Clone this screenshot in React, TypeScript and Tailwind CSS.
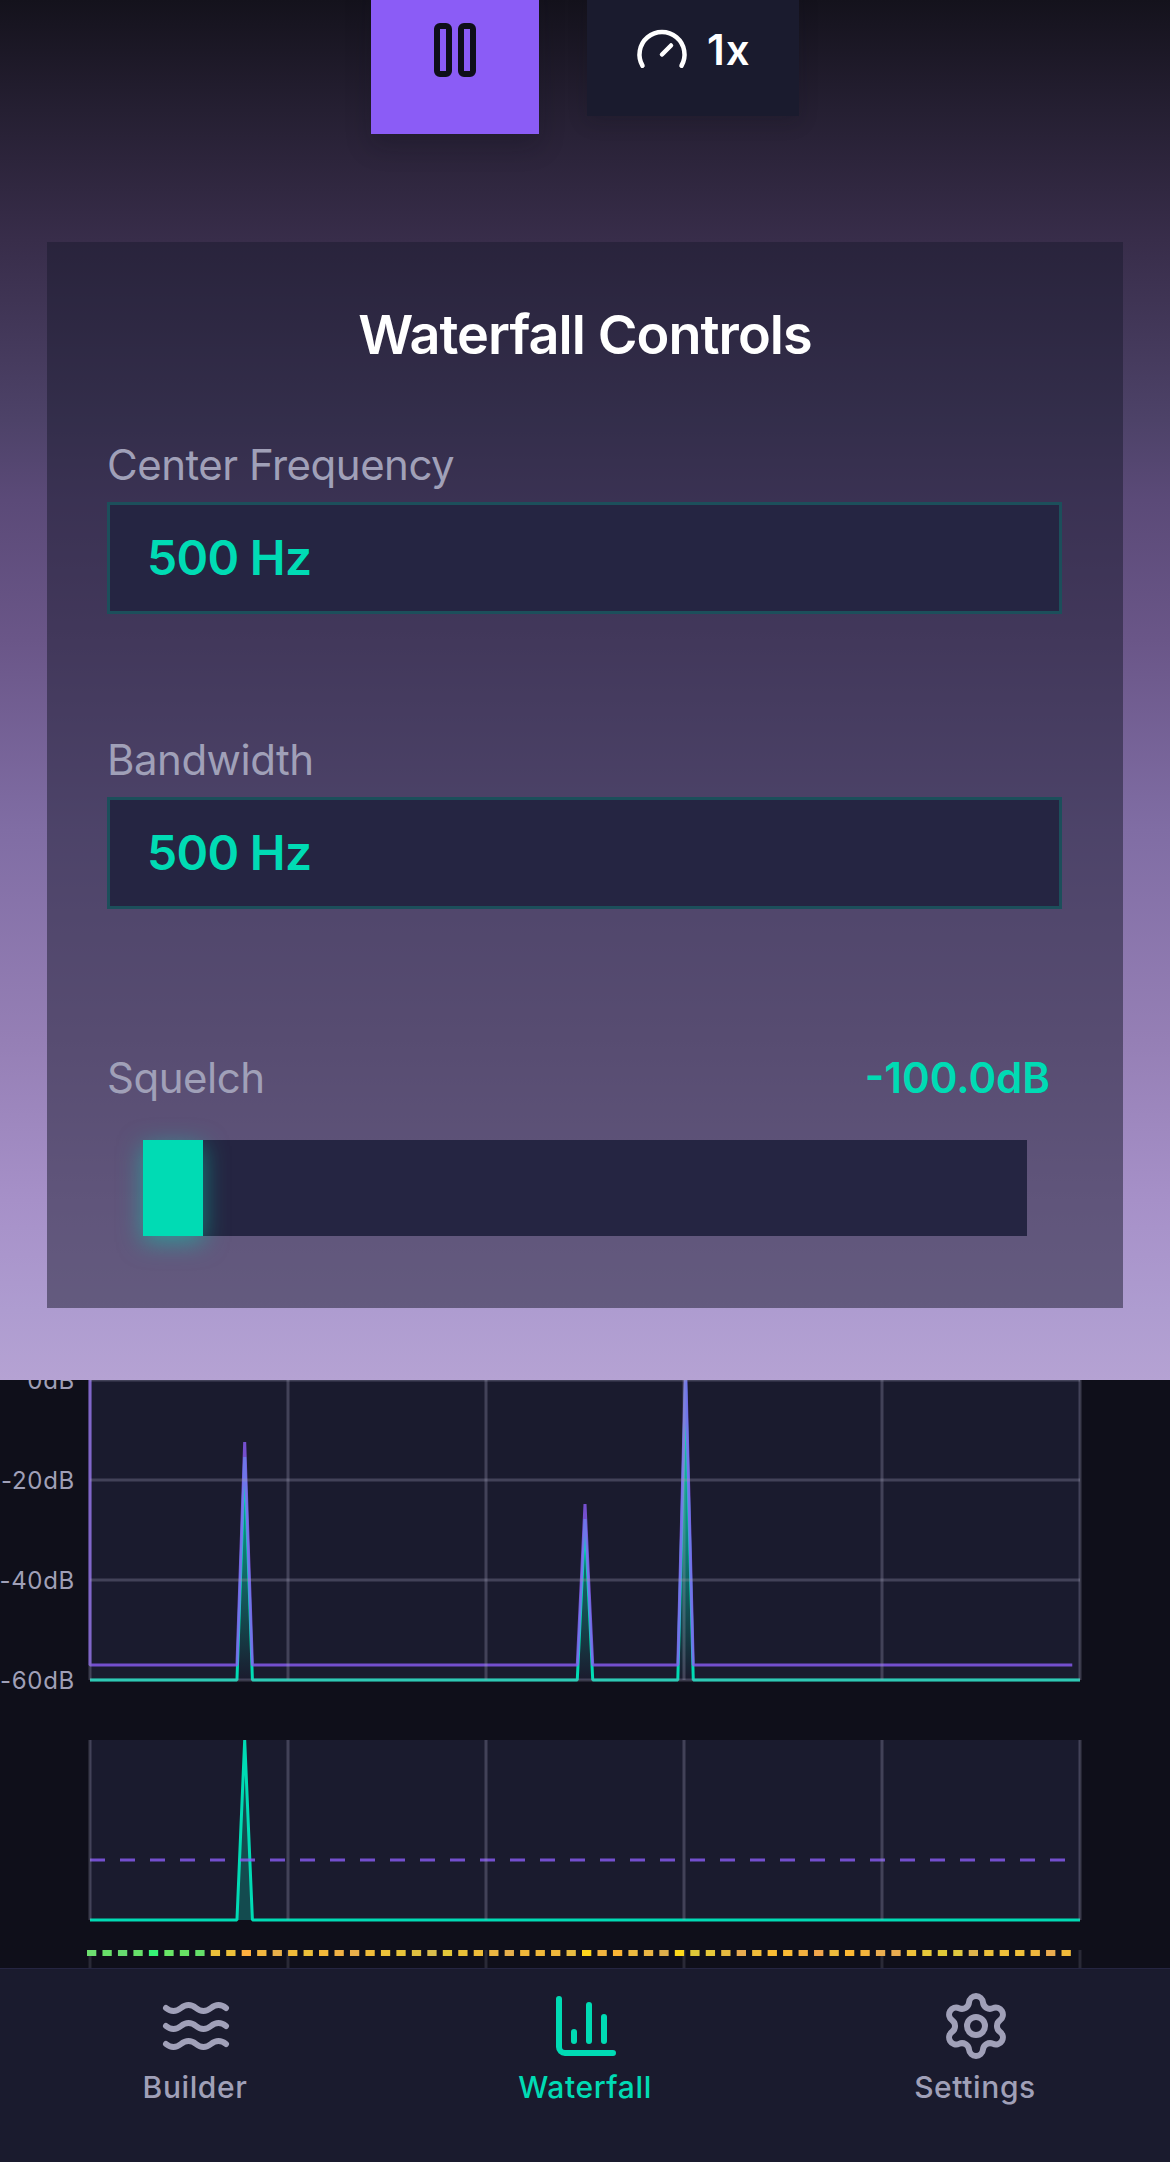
import React from 'react';

const STEP = 990 / 128;
const px = (i: number) => 90 + i * STEP;
const GRID_X = [90, 288, 486, 684, 882, 1080];

const PEAKS = [
  { i: 20, hold: 1442, live: 1457 },
  { i: 64, hold: 1504, live: 1519 },
  { i: 77, hold: 1365, live: 1380 },
];

const DOTS = [
  '#6ddf70', '#69e06a', '#67db70', '#67e06a', '#36f476', '#69e667', '#67e364', '#65e06a',
  '#ecc03a', '#ecc03a', '#ffb03f', '#f0b640', '#e8b04a', '#f0ba3a', '#ecbf3a', '#f4b93a',
  '#f0b245', '#ebb04a', '#f0bc3a', '#edc33a', '#e6c33a', '#dfbf40', '#d9bd4c', '#e3c73a',
  '#e9c038', '#edbc3a', '#ebb642', '#e6b04c', '#f0b83a', '#f0b83a', '#f0b83c', '#e6bb42',
  '#fcd41c', '#f0b440', '#fab535', '#edba40', '#ebb644', '#dfb04c', '#fcd81c', '#dfc838',
  '#e6c83a', '#e6ba40', '#e8ac50', '#f0bc3a', '#f8bc34', '#fabb35', '#f2b040', '#f0a64c',
  '#eebb3c', '#fcb834', '#f4b43c', '#eaae50', '#eaac50', '#edc03a', '#e6c83a', '#dfc838',
  '#e0c840', '#dfb44c', '#ecc03a', '#f0c03a', '#f0c03a', '#f0b83e', '#eaac50', '#f0ba3a',
];

const holdPath =
  `M90 1365V1665` +
  PEAKS.map((p) => `H${px(p.i - 1)}L${px(p.i)} ${p.hold}L${px(p.i + 1)} 1665`).join('') +
  `H${px(127)}`;
const livePath =
  `M90 1680` +
  PEAKS.map((p) => `H${px(p.i - 1)}L${px(p.i)} ${p.live}L${px(p.i + 1)} 1680`).join('') +
  `H1080`;

function Spectrum() {
  return (
    <svg className="block h-[588px] w-[1170px] shrink-0 bg-[#0f0f1a]" viewBox="0 1380 1170 588">
      <defs>
        <linearGradient id="live" gradientUnits="userSpaceOnUse" x1="0" y1="1380" x2="0" y2="1680">
          <stop offset="0" stopColor="#00dbb4" />
          <stop offset="0.5" stopColor="#00dbb4" stopOpacity="0.58" />
          <stop offset="1" stopColor="#00dbb4" stopOpacity="0" />
        </linearGradient>
      </defs>
      <rect x="90" y="1380" width="990" height="300" fill="#1a1b2e" />
      <path d={livePath} fill="url(#live)" stroke="#00dbb4" strokeWidth="3" strokeLinejoin="bevel" />
      <path d={holdPath} fill="none" stroke="#8b5cf6" strokeOpacity="0.8" strokeWidth="3" strokeLinejoin="bevel" />
      <g stroke="#a0a0b8" strokeOpacity="0.3" strokeWidth="3">
        {GRID_X.map((x) => (
          <line key={x} x1={x} x2={x} y1="1380" y2="1680" />
        ))}
        {[1380, 1480, 1580, 1680].map((y) => (
          <line key={y} x1="90" x2="1080" y1={y} y2={y} />
        ))}
      </g>
      <g fill="#a0a0b8" fontSize="24" textAnchor="end" className="font-['Inter',sans-serif] tracking-[0.7px]">
        <text x="75" y="1389">0dB</text>
        <text x="75" y="1489">-20dB</text>
        <text x="75" y="1589">-40dB</text>
        <text x="75" y="1689">-60dB</text>
      </g>

      <rect x="90" y="1740" width="990" height="180" fill="#1a1b2e" />
      <path
        d={`M90 1920H${px(19)}L${px(20)} 1740L${px(21)} 1920H1080`}
        fill="#00dbb4"
        fillOpacity="0.25"
        stroke="#00dbb4"
        strokeWidth="3"
        strokeLinejoin="bevel"
      />
      <line x1="90" x2="1072" y1="1860" y2="1860" stroke="#8b5cf6" strokeOpacity="0.8" strokeWidth="3" strokeDasharray="15 15" />
      <g stroke="#a0a0b8" strokeOpacity="0.3" strokeWidth="3">
        {GRID_X.map((x) => (
          <line key={x} x1={x} x2={x} y1="1740" y2="1920" />
        ))}
      </g>

      <g stroke="#a0a0b8" strokeOpacity="0.18" strokeWidth="3">
        {GRID_X.map((x) => (
          <line key={x} x1={x} x2={x} y1="1950" y2="1970" />
        ))}
      </g>
      {DOTS.map((c, i) => (
        <rect key={i} x={87 + i * 2 * STEP} y="1950" width="9.3" height="6" fill={c} />
      ))}
    </svg>
  );
}

function Field({ label, value }: { label: string; value: string }) {
  return (
    <div className="flex h-[295px] flex-col">
      <div className="h-[58px] text-[42px] leading-[42px] tracking-[-0.5px] text-[#a0a0b8]">{label}</div>
      <div className="flex h-[112px] items-center border-[3px] border-[#1c4f5b] bg-[#252542] pl-[37px] text-[48px] font-semibold leading-none tracking-[-0.7px] text-[#00dbb4]">
        {value}
      </div>
    </div>
  );
}

const iconProps = {
  viewBox: '0 0 24 24',
  fill: 'none',
  stroke: 'currentColor',
  strokeWidth: 2,
  strokeLinecap: 'round' as const,
  strokeLinejoin: 'round' as const,
};

function Tab({ label, active, children }: { label: string; active?: boolean; children: React.ReactNode }) {
  return (
    <div className={`flex flex-1 flex-col items-center pt-[21px] ${active ? 'text-[#00dbb4]' : 'text-[#a0a0b8]'}`}>
      <svg {...iconProps} className="ml-[2px] size-[72px]">{children}</svg>
      <span className="mt-[7px] text-[30px] font-medium leading-[36px] tracking-[0.6px]">{label}</span>
    </div>
  );
}

export default function App() {
  return (
    <div className="flex h-[2162px] w-[1170px] flex-col overflow-hidden bg-[#0f0f1a] font-['Inter',sans-serif]">
      <section className="h-[1380px] shrink-0 overflow-hidden bg-[linear-gradient(180deg,#14121c_0px,#251f32_110px,#382d4a_240px,#4d4268_420px,#5b4a78_500px,#6a5688_640px,#806da4_830px,#957fb5_1040px,#a690c8_1200px,#ae9cd0_1310px,#b5a2d3_1380px)]">
        <div className="flex h-[242px] justify-center gap-12">
          <button className="-mt-[34px] flex h-[168px] w-[168px] items-center justify-center bg-[#8b5cf6] text-[#0f0f1a] shadow-[0_12px_24px_rgba(15,15,26,0.22)]">
            <svg {...iconProps} className="size-[72px]">
              <rect x="14" y="4" width="4" height="16" rx="1" />
              <rect x="6" y="4" width="4" height="16" rx="1" />
            </svg>
          </button>
          <button className="-mt-4 flex h-[132px] w-[212px] items-center gap-[18px] bg-[#1a1b2e] pl-12 text-[42px] font-semibold text-white shadow-[0_6px_18px_rgba(15,15,26,0.18)]">
            <svg {...iconProps} className="size-[54px]">
              <path d="m12 14 4-4" />
              <path d="M3.34 19a10 10 0 1 1 17.32 0" />
            </svg>
            <span className="-mt-[2px] tracking-[1px]">1x</span>
          </button>
        </div>
        <div className="mx-[47px] h-[1066px] bg-[#1a1a2e]/50 px-[60px] pt-[60px]">
          <h1 className="mb-[76px] text-center text-[54px] font-semibold leading-[66px] tracking-[-0.95px] text-white">Waterfall Controls</h1>
          <div className="mr-[1px]">
            <Field label="Center Frequency" value="500 Hz" />
            <Field label="Bandwidth" value="500 Hz" />
          </div>
          <div className="mt-[17px] flex justify-between pr-[13px] text-[42px] leading-[54px]">
            <span className="tracking-[-0.5px] text-[#a0a0b8]">Squelch</span>
            <span className="font-semibold text-[#00dbb4]">-100.0dB</span>
          </div>
          <div className="mx-9 mt-[35px] h-24 bg-[#252542]">
            <div className="h-24 w-[60px] bg-[#00dbb4] shadow-[0_6px_24px_rgba(0,219,180,0.5)]" />
          </div>
        </div>
      </section>

      <Spectrum />

      <nav className="flex h-[194px] shrink-0 border-t border-[#252542] bg-[#1a1b2e]">
        <Tab label="Builder">
          <path d="M2 6c.6.5 1.2 1 2.5 1C7 7 7 5 9.5 5c2.6 0 2.4 2 5 2 2.5 0 2.5-2 5-2 1.3 0 1.9.5 2.5 1" />
          <path d="M2 12c.6.5 1.2 1 2.5 1 2.5 0 2.5-2 5-2 2.6 0 2.4 2 5 2 2.5 0 2.5-2 5-2 1.3 0 1.9.5 2.5 1" />
          <path d="M2 18c.6.5 1.2 1 2.5 1 2.5 0 2.5-2 5-2 2.6 0 2.4 2 5 2 2.5 0 2.5-2 5-2 1.3 0 1.9.5 2.5 1" />
        </Tab>
        <Tab label="Waterfall" active>
          <path d="M3 3v16a2 2 0 0 0 2 2h16" />
          <path d="M18 17V9" />
          <path d="M13 17V5" />
          <path d="M8 17v-3" />
        </Tab>
        <Tab label="Settings">
          <path d="M9.671 4.136a2.34 2.34 0 0 1 4.659 0 2.34 2.34 0 0 0 3.319 1.915 2.34 2.34 0 0 1 2.33 4.033 2.34 2.34 0 0 0 0 3.831 2.34 2.34 0 0 1-2.33 4.033 2.34 2.34 0 0 0-3.319 1.915 2.34 2.34 0 0 1-4.659 0 2.34 2.34 0 0 0-3.32-1.915 2.34 2.34 0 0 1-2.33-4.033 2.34 2.34 0 0 0 0-3.831A2.34 2.34 0 0 1 6.35 6.051a2.34 2.34 0 0 0 3.319-1.915" />
          <circle cx="12" cy="12" r="3" />
        </Tab>
      </nav>
    </div>
  );
}
